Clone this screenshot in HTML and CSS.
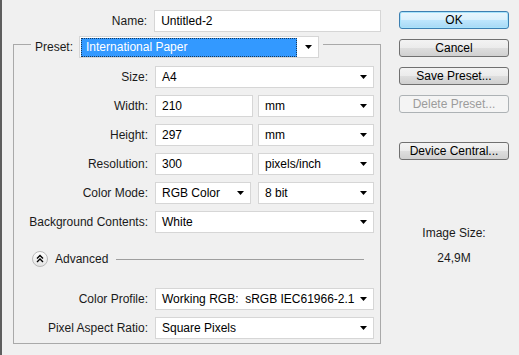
FILE: index.html
```html
<!DOCTYPE html>
<html>
<head>
<meta charset="utf-8">
<link rel="stylesheet" href="styles.css">
</head>
<body>
<div class="dialog">
  <div class="main">
    <div class="row name-row">
      <span class="lbl">Name:</span>
      <div class="field w-name">Untitled-2</div>
    </div>
    <div class="group">
      <div class="group-head">
        <div class="legend">
          <span class="lbl-p">Preset:</span>
          <div class="field select preset">
            <span class="sel">International Paper</span>
            <svg class="arr" width="7" height="4" viewBox="0 0 7 4"><path d="M0 0h7L3.5 4z"/></svg>
          </div>
        </div>
      </div>
      <div class="row">
        <span class="lbl">Size:</span>
        <div class="field select w-full">A4<svg class="arr" width="7" height="4" viewBox="0 0 7 4"><path d="M0 0h7L3.5 4z"/></svg></div>
      </div>
      <div class="row">
        <span class="lbl">Width:</span>
        <div class="field w-num">210</div>
        <div class="field select w-unit">mm<svg class="arr" width="7" height="4" viewBox="0 0 7 4"><path d="M0 0h7L3.5 4z"/></svg></div>
      </div>
      <div class="row">
        <span class="lbl">Height:</span>
        <div class="field w-num">297</div>
        <div class="field select w-unit">mm<svg class="arr" width="7" height="4" viewBox="0 0 7 4"><path d="M0 0h7L3.5 4z"/></svg></div>
      </div>
      <div class="row">
        <span class="lbl">Resolution:</span>
        <div class="field w-num">300</div>
        <div class="field select w-unit">pixels/inch<svg class="arr" width="7" height="4" viewBox="0 0 7 4"><path d="M0 0h7L3.5 4z"/></svg></div>
      </div>
      <div class="row">
        <span class="lbl">Color Mode:</span>
        <div class="field select w-mode">RGB Color<svg class="arr" width="7" height="4" viewBox="0 0 7 4"><path d="M0 0h7L3.5 4z"/></svg></div>
        <div class="field select w-bit">8 bit<svg class="arr" width="7" height="4" viewBox="0 0 7 4"><path d="M0 0h7L3.5 4z"/></svg></div>
      </div>
      <div class="row">
        <span class="lbl">Background Contents:</span>
        <div class="field select w-full">White<svg class="arr" width="7" height="4" viewBox="0 0 7 4"><path d="M0 0h7L3.5 4z"/></svg></div>
      </div>
      <div class="adv">
        <svg class="adv-ico" width="16" height="16" viewBox="0 0 16 16">
          <defs>
            <linearGradient id="g" x1="0" y1="0" x2="0" y2="1">
              <stop offset="0" stop-color="#ffffff"/>
              <stop offset="1" stop-color="#e2e2e2"/>
            </linearGradient>
          </defs>
          <circle cx="8" cy="8" r="7.5" fill="url(#g)" stroke="#b9b9b9"/>
          <path d="M5 7.5L8 4.5L11 7.5M5 11L8 8L11 11" fill="none" stroke="#000" stroke-width="1.4"/>
        </svg>
        <span class="adv-txt">Advanced</span>
        <span class="adv-line"></span>
      </div>
      <div class="row row-cp">
        <span class="lbl">Color Profile:</span>
        <div class="field select w-full"><span class="pre">Working RGB:  sRGB IEC61966-2.1</span><svg class="arr" width="7" height="4" viewBox="0 0 7 4"><path d="M0 0h7L3.5 4z"/></svg></div>
      </div>
      <div class="row">
        <span class="lbl">Pixel Aspect Ratio:</span>
        <div class="field select w-full">Square Pixels<svg class="arr" width="7" height="4" viewBox="0 0 7 4"><path d="M0 0h7L3.5 4z"/></svg></div>
      </div>
    </div>
  </div>
  <div class="side">
    <div class="btn btn-default">OK</div>
    <div class="btn">Cancel</div>
    <div class="btn">Save Preset...</div>
    <div class="btn btn-disabled">Delete Preset...</div>
    <div class="btn btn-device">Device Central...</div>
    <div class="info-lbl">Image Size:</div>
    <div class="info-val">24,9M</div>
  </div>
</div>
</body>
</html>
```

FILE: styles.css
```css
html, body {
  margin: 0;
  padding: 0;
}
body {
  width: 519px;
  height: 355px;
  box-sizing: border-box;
  background: #f0f0f0;
  border-left: 2px solid #5e5e5e;
  font-family: "Liberation Sans", Arial, sans-serif;
  font-size: 12px;
  color: #1a1a1a;
  overflow: hidden;
}
.dialog {
  display: flex;
  align-items: flex-start;
}
.main {
  width: 379px;
  padding-top: 10px;
}
.row {
  display: flex;
  align-items: center;
  margin-top: 7px;
}
.name-row {
  margin-top: 0;
}
.lbl {
  width: 134px;
  margin-right: 7px;
  text-align: right;
  white-space: nowrap;
}
.name-row .lbl {
  width: 146px;
}
.field {
  box-sizing: border-box;
  height: 22px;
  display: flex;
  align-items: center;
  background: #fff;
  border: 1px solid #d6d6d6;
  padding: 0 6px;
  white-space: nowrap;
  color: #000;
}
.select {
  justify-content: space-between;
}
.arr {
  display: block;
  flex: none;
}
.pre {
  white-space: pre;
}
.w-name { width: 228px; }
.w-full { width: 219px; }
.w-num { width: 98px; margin-right: 5px; }
.w-unit { width: 116px; }
.w-mode { width: 96px; margin-right: 7px; }
.w-bit { width: 116px; }

.group {
  box-sizing: border-box;
  width: 368px;
  margin-left: 11px;
  margin-top: 12px;
  border: 1px solid #a9a9a9;
  padding-bottom: 4px;
}
.group-head {
  display: flex;
  margin-top: -9px;
  height: 22px;
}
.legend {
  display: flex;
  align-items: center;
  margin-left: 17px;
  padding: 0 4px;
  background: #f0f0f0;
}
.lbl-p {
  margin-right: 6px;
}
.preset {
  width: 240px;
  height: 22px;
  padding: 0 6px 0 1px;
}
.sel {
  box-sizing: border-box;
  width: 216px;
  height: 19px;
  background: #3399ff;
  border: 1px dotted #1a3a5a;
  color: #fff;
  padding-left: 4px;
  display: flex;
  align-items: center;
}
.group-head + .row {
  margin-top: 8px;
}
.adv {
  display: flex;
  align-items: center;
  height: 18px;
  margin-top: 17px;
  padding-left: 18px;
}
.adv-ico {
  display: block;
  flex: none;
}
.adv-txt {
  margin-left: 7px;
}
.adv-line {
  flex: 1;
  height: 1px;
  background: #9e9e9e;
  margin-left: 8px;
  margin-right: 16px;
}
.row-cp {
  margin-top: 20px;
}

.side {
  width: 110px;
  margin-left: 18px;
  padding-top: 11px;
  display: flex;
  flex-direction: column;
}
.btn {
  box-sizing: border-box;
  height: 18px;
  margin-bottom: 10px;
  border: 1px solid #707070;
  border-radius: 3px;
  background: linear-gradient(#f3f3f3 0%, #ebebeb 50%, #dedede 51%, #d0d0d0 100%);
  display: flex;
  align-items: center;
  justify-content: center;
  color: #000;
  white-space: nowrap;
}
.btn-default {
  border-color: #3c7fb1;
  background: linear-gradient(#eaf6fd 0%, #d9f0fc 50%, #bee6fd 51%, #a7d9f5 100%);
  box-shadow: inset 0 0 0 1px #a7e3fb;
}
.btn-disabled {
  border-color: #adb2b5;
  background: #f4f4f4;
  color: #9c9c9c;
}
.btn-device {
  margin-top: 19px;
}
.info-lbl {
  margin-top: 56px;
  text-align: center;
  line-height: 15px;
}
.info-val {
  margin-top: 10px;
  text-align: center;
  line-height: 15px;
}
```
